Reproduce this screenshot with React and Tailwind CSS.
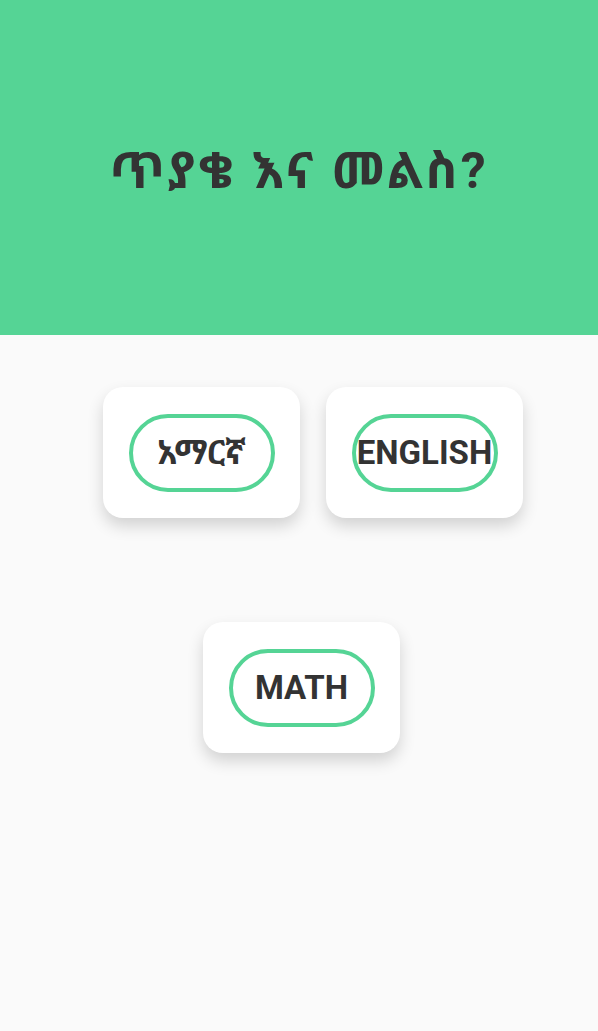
import React from 'react'

const subjects = [
  { labels: ['አማርኛ', 'ENGLISH'], shift: 'pl-[28px]' },
  { labels: ['MATH'], shift: 'pl-[5px]' }
]

function SubjectCard({ label }) {
  return (
    <div className="w-[197px] h-[131px] bg-white rounded-[20px] shadow-[0_8px_16px_rgba(0,0,0,0.16)] flex items-center justify-center">
      <div className="w-[146px] h-[78px] rounded-full border-[4px] border-[#55d495] flex items-center justify-center">
        <span className="text-[33px] font-bold text-[#333] whitespace-nowrap leading-none">{label}</span>
      </div>
    </div>
  )
}

function App() {
  return (
    <div className="min-h-[1031px] bg-[#fafafa] font-['Roboto','Noto_Sans','Noto_Sans_Ethiopic',sans-serif]">
      <div className="h-[335px] bg-[#55d495] flex items-center justify-center">
        <h1 className="text-[50px] font-bold text-[#333] tracking-[3px] pt-[8px]">ጥያቄ እና መልስ?</h1>
      </div>
      <div className="flex flex-col items-center gap-[104px] pt-[52px]">
        {subjects.map((row, i) => (
          <div key={i} className={`flex gap-[26px] ${row.shift}`}>
            {row.labels.map(label => <SubjectCard key={label} label={label} />)}
          </div>
        ))}
      </div>
    </div>
  )
}

export default App
